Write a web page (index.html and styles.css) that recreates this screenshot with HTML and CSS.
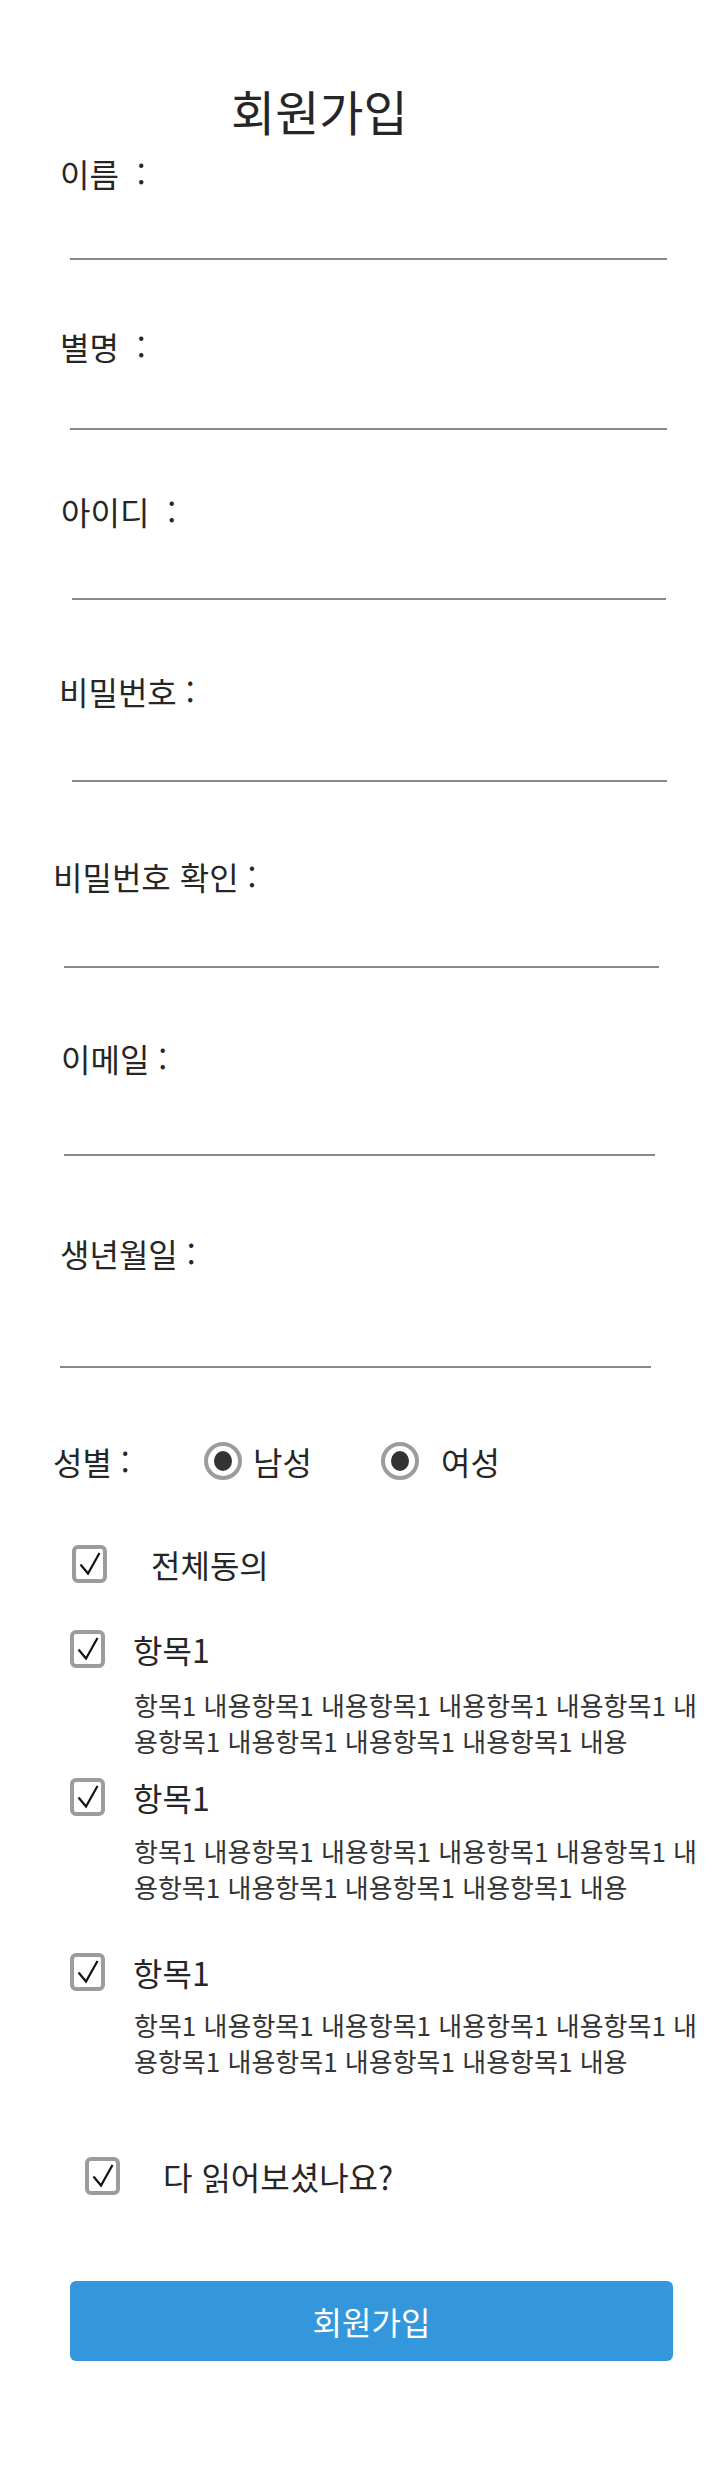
FILE: index.html
```html
<!DOCTYPE html>
<html lang="ko">
<head>
<meta charset="utf-8">
<title>회원가입</title>
<link rel="stylesheet" href="styles.css">
</head>
<body>
<div class="page">
  <h1 class="title">회원가입</h1>

  <div class="field f-name">
    <div class="field-label">이름&nbsp;&nbsp;:</div>
    <div class="underline"></div>
  </div>
  <div class="field f-nick">
    <div class="field-label">별명&nbsp;&nbsp;:</div>
    <div class="underline"></div>
  </div>
  <div class="field f-id">
    <div class="field-label">아이디&nbsp;&nbsp;:</div>
    <div class="underline"></div>
  </div>
  <div class="field f-pw">
    <div class="field-label">비밀번호 :</div>
    <div class="underline"></div>
  </div>
  <div class="field f-pw2">
    <div class="field-label">비밀번호 확인 :</div>
    <div class="underline"></div>
  </div>
  <div class="field f-mail">
    <div class="field-label">이메일 :</div>
    <div class="underline"></div>
  </div>
  <div class="field f-birth">
    <div class="field-label">생년월일 :</div>
    <div class="underline"></div>
  </div>

  <div class="gender-row">
    <span class="gender-label">성별 :</span>
    <span class="radio"><span class="radio-dot"></span></span>
    <span class="radio-text t-male">남성</span>
    <span class="radio"><span class="radio-dot"></span></span>
    <span class="radio-text t-female">여성</span>
  </div>

  <div class="check-row c-all">
    <span class="cbox"><svg viewBox="0 0 27 30" class="tick"><polyline points="4.5,15.5 12,24.5 23.5,4"/></svg></span>
    <span class="check-text">전체동의</span>
  </div>

  <div class="check-row c-item1">
    <span class="cbox"><svg viewBox="0 0 27 30" class="tick"><polyline points="4.5,15.5 12,24.5 23.5,4"/></svg></span>
    <span class="check-text">항목1</span>
  </div>
  <p class="desc d-item1">항목1 내용항목1 내용항목1 내용항목1 내용항목1 내용항목1 내용항목1 내용항목1 내용항목1 내용</p>

  <div class="check-row c-item2">
    <span class="cbox"><svg viewBox="0 0 27 30" class="tick"><polyline points="4.5,15.5 12,24.5 23.5,4"/></svg></span>
    <span class="check-text">항목1</span>
  </div>
  <p class="desc d-item2">항목1 내용항목1 내용항목1 내용항목1 내용항목1 내용항목1 내용항목1 내용항목1 내용항목1 내용</p>

  <div class="check-row c-item3">
    <span class="cbox"><svg viewBox="0 0 27 30" class="tick"><polyline points="4.5,15.5 12,24.5 23.5,4"/></svg></span>
    <span class="check-text">항목1</span>
  </div>
  <p class="desc d-item3">항목1 내용항목1 내용항목1 내용항목1 내용항목1 내용항목1 내용항목1 내용항목1 내용항목1 내용</p>

  <div class="check-row c-read">
    <span class="cbox"><svg viewBox="0 0 27 30" class="tick"><polyline points="4.5,15.5 12,24.5 23.5,4"/></svg></span>
    <span class="check-text">다 읽어보셨나요?</span>
  </div>

  <button class="submit" type="button">회원가입</button>
</div>
</body>
</html>
```

FILE: styles.css
```css
* {
  box-sizing: border-box;
}

html, body {
  margin: 0;
  background: #ffffff;
}

body {
  font-family: "Noto Sans CJK KR", "Noto Sans", sans-serif;
  color: #262626;
}

.page {
  width: 720px;
  padding-top: 82px;
  padding-bottom: 110px;
}

.title {
  margin: 0 0 0 231px;
  font-size: 48px;
  font-weight: 400;
  line-height: 56px;
}

/* ---------- text fields ---------- */
.field-label {
  font-size: 32px;
  line-height: 40px;
  white-space: nowrap;
}

.underline {
  height: 2px;
  background: #888888;
}

.f-name .field-label  { margin: 15px 0 0 60px; }
.f-name .underline    { margin: 65px 0 0 70px; width: 597px; }

.f-nick .field-label  { margin: 66px 0 0 60px; }
.f-nick .underline    { margin: 62px 0 0 70px; width: 597px; }

.f-id .field-label    { margin: 61px 0 0 61px; }
.f-id .underline      { margin: 67px 0 0 72px; width: 594px; }

.f-pw .field-label    { margin: 71px 0 0 59px; }
.f-pw .underline      { margin: 69px 0 0 72px; width: 595px; }

.f-pw2 .field-label   { margin: 74px 0 0 53px; }
.f-pw2 .underline     { margin: 70px 0 0 64px; width: 595px; }

.f-mail .field-label  { margin: 70px 0 0 61px; }
.f-mail .underline    { margin: 76px 0 0 64px; width: 591px; }

.f-birth .field-label { margin: 77px 0 0 60px; }
.f-birth .underline   { margin: 93px 0 0 60px; width: 591px; }

/* ---------- gender ---------- */
.gender-row {
  display: flex;
  align-items: center;
  height: 40px;
  margin: 73px 0 0 53px;
  font-size: 32px;
  line-height: 40px;
}

.gender-label {
  width: 151px;
  flex: none;
}

.radio {
  display: flex;
  align-items: center;
  justify-content: center;
  width: 38px;
  height: 38px;
  border: 4px solid #9c9c9c;
  border-radius: 50%;
  flex: none;
}

.radio-dot {
  width: 18px;
  height: 20px;
  border-radius: 50%;
  background: #333333;
}

.t-male   { width: 139px; padding-left: 11px; flex: none; }
.t-female { padding-left: 22px; }

/* ---------- checkboxes ---------- */
.check-row {
  display: flex;
  align-items: center;
  height: 40px;
  font-size: 32px;
  line-height: 40px;
}

.cbox {
  display: block;
  width: 35px;
  height: 38px;
  border: 4px solid #9c9c9c;
  border-radius: 6px;
  flex: none;
}

.tick {
  display: block;
  width: 27px;
  height: 30px;
  fill: none;
  stroke: #111111;
  stroke-width: 2.2;
  stroke-linejoin: miter;
}

.c-all   { margin: 63px 0 0 72px; }
.c-all .check-text { margin-left: 44px; }

.c-item1 { margin: 45px 0 0 70px; }
.c-item2 { margin: 18px 0 0 70px; }
.c-item3 { margin: 47px 0 0 70px; }
.c-item1 .check-text,
.c-item2 .check-text,
.c-item3 .check-text { margin-left: 28px; }

.c-read  { margin: 77px 0 0 85px; }
.c-read .check-text { margin-left: 43px; }

.desc {
  width: 570px;
  margin: 0 0 0 134px;
  font-size: 26px;
  line-height: 36px;
  color: #333333;
  word-break: break-all;
}

.d-item1 { margin-top: 18px; }
.d-item2 { margin-top: 16px; }
.d-item3 { margin-top: 15px; }

/* ---------- submit ---------- */
.submit {
  display: block;
  width: 603px;
  height: 80px;
  margin: 85px 0 0 70px;
  padding: 0;
  border: none;
  border-radius: 6px;
  background: #3597db;
  color: #ffffff;
  font-family: "Noto Sans CJK KR", "Noto Sans", sans-serif;
  font-size: 32px;
  line-height: 40px;
  text-align: center;
}
```
